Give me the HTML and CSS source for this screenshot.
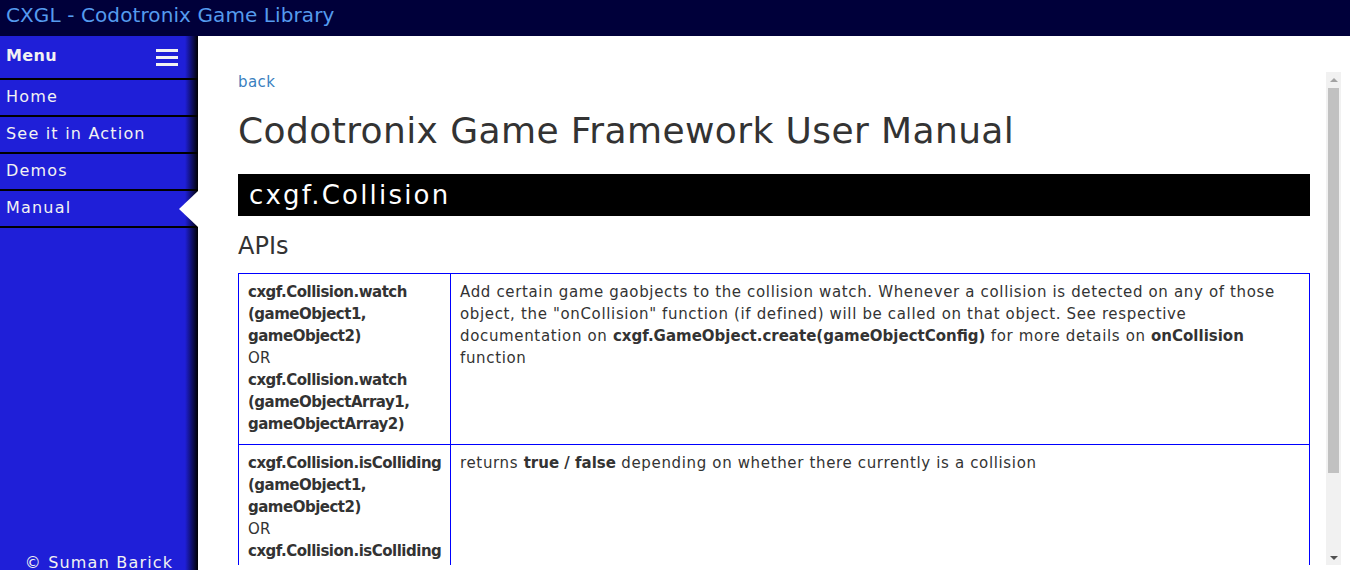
FILE: index.html
```html
<!DOCTYPE html>
<html lang="en">
<head>
<meta charset="utf-8">
<title>CXGL - Codotronix Game Library</title>
<link rel="stylesheet" href="styles.css">
</head>
<body>
<header class="topbar">CXGL - Codotronix Game Library</header>
<div class="layout">
  <nav class="sidebar">
    <div class="menu-head">
      <span>Menu</span>
      <span class="burger"><i></i><i></i><i></i></span>
    </div>
    <a class="nav-item" href="#">Home</a>
    <a class="nav-item" href="#">See it in Action</a>
    <a class="nav-item" href="#">Demos</a>
    <a class="nav-item active" href="#">Manual</a>
    <div class="footer">&copy; Suman Barick</div>
  </nav>
  <main class="main">
    <div class="scroller">
      <a class="back" href="#">back</a>
      <h1 class="title">Codotronix Game Framework User Manual</h1>
      <h2 class="module">cxgf.Collision</h2>
      <h3 class="section">APIs</h3>
      <table class="api">
        <colgroup><col class="c1"><col></colgroup>
        <tr>
          <td class="sig"><b>cxgf.Collision.watch<br>(gameObject1,<br>gameObject2)</b><br>OR<br><b>cxgf.Collision.watch<br>(gameObjectArray1,<br>gameObjectArray2)</b></td>
          <td class="desc">Add certain game gaobjects to the collision watch. Whenever a collision is detected on any of those object, the "onCollision" function (if defined) will be called on that object. See respective<br>documentation on <b>cxgf.GameObject.create(gameObjectConfig)</b> for more details on <b>onCollision</b><br>function</td>
        </tr>
        <tr>
          <td class="sig"><b>cxgf.Collision.isColliding<br>(gameObject1,<br>gameObject2)</b><br>OR<br><b>cxgf.Collision.isColliding<br>(gameObjectArray1,<br>gameObjectArray2)</b></td>
          <td class="desc">returns <b>true / false</b> depending on whether there currently is a collision</td>
        </tr>
      </table>
    </div>
    <div class="scrollbar">
      <div class="sb-btn"><span class="tri up"></span></div>
      <div class="sb-track"><div class="sb-thumb"></div></div>
      <div class="sb-btn"><span class="tri down"></span></div>
    </div>
  </main>
</div>
</body>
</html>
```

FILE: styles.css
```css
* { box-sizing: border-box; }
html, body { margin: 0; height: 100%; }
body {
  font-family: "DejaVu Sans", "Liberation Sans", sans-serif;
  color: #333;
  display: flex;
  flex-direction: column;
  overflow: hidden;
}
.topbar {
  height: 36px;
  flex: 0 0 36px;
  background: #00003a;
  color: #559bee;
  font-size: 20px;
  line-height: 30px;
  padding-left: 6px;
  letter-spacing: 0.1px;
}
.layout {
  flex: 1;
  display: flex;
  min-height: 0;
}
.sidebar {
  width: 198px;
  flex: 0 0 198px;
  display: flex;
  flex-direction: column;
  background: linear-gradient(to right, #1f1fd8 0, #1f1fd8 185px, #000 198px);
  color: #f2f2f2;
  overflow: hidden;
}
.menu-head {
  height: 44px;
  flex: 0 0 44px;
  border-bottom: 2px solid #000;
  display: flex;
  align-items: center;
  justify-content: space-between;
  padding: 0 20px 4px 6px;
  font-weight: bold;
  font-size: 16px;
  letter-spacing: 0.4px;
}
.burger {
  display: flex;
  flex-direction: column;
  gap: 4px;
  width: 22px;
  padding-top: 4px;
}
.burger i {
  display: block;
  height: 3px;
  background: #f2f2f2;
}
.nav-item {
  position: relative;
  height: 37px;
  flex: 0 0 37px;
  border-bottom: 2px solid #000;
  color: #f2f2f2;
  text-decoration: none;
  font-size: 16px;
  letter-spacing: 1.2px;
  line-height: 34px;
  padding-left: 6px;
}
.nav-item.active::after {
  content: "";
  position: absolute;
  right: 0;
  top: 0;
  border-top: 18px solid transparent;
  border-bottom: 18px solid transparent;
  border-right: 19px solid #fff;
}
.footer {
  margin-top: auto;
  margin-bottom: -6px;
  text-align: center;
  font-size: 16px;
  letter-spacing: 1.2px;
  line-height: 26px;
}
.main {
  flex: 1;
  background: #fff;
  padding: 36px 9px 5px 24px;
  display: flex;
  min-width: 0;
}
.scroller {
  flex: 1;
  overflow: hidden;
  padding: 0 16px;
}
.back {
  display: block;
  color: #3a7fc0;
  text-decoration: none;
  font-size: 15px;
  line-height: 20px;
  letter-spacing: 0.4px;
}
.title {
  margin: 19px 0 23px;
  font-size: 36px;
  line-height: 40px;
  font-weight: normal;
  letter-spacing: 0.4px;
}
.module {
  margin: 0;
  background: #000;
  color: #fff;
  font-size: 26px;
  font-weight: normal;
  line-height: 42px;
  padding-left: 11px;
  letter-spacing: 2.2px;
}
.section {
  margin: 16px 0 13px;
  font-size: 24px;
  line-height: 28px;
  font-weight: normal;
}
.api {
  width: 100%;
  border-collapse: collapse;
  table-layout: fixed;
  font-size: 15px;
  line-height: 22px;
}
.api .c1 { width: 212px; }
.api td {
  border: 1px solid #0000ff;
  padding: 7px 9px 9px;
  vertical-align: top;
}
.api .sig { letter-spacing: 0.2px; }
.api .sig b { letter-spacing: -0.5px; }
.api .desc { letter-spacing: 0.65px; }
.api .desc b { letter-spacing: 0; }
.scrollbar {
  width: 15px;
  flex: 0 0 15px;
  background: #f1f1f1;
  display: flex;
  flex-direction: column;
}
.sb-btn {
  height: 15px;
  flex: 0 0 15px;
  display: flex;
  align-items: center;
  justify-content: center;
}
.tri {
  width: 0;
  height: 0;
  border-left: 4px solid transparent;
  border-right: 4px solid transparent;
}
.tri.up { border-bottom: 4px solid #a3a3a3; }
.tri.down { border-top: 4px solid #505050; }
.sb-track {
  flex: 1;
  padding: 1px 2px;
}
.sb-thumb {
  height: 385px;
  background: #c1c1c1;
}
```
